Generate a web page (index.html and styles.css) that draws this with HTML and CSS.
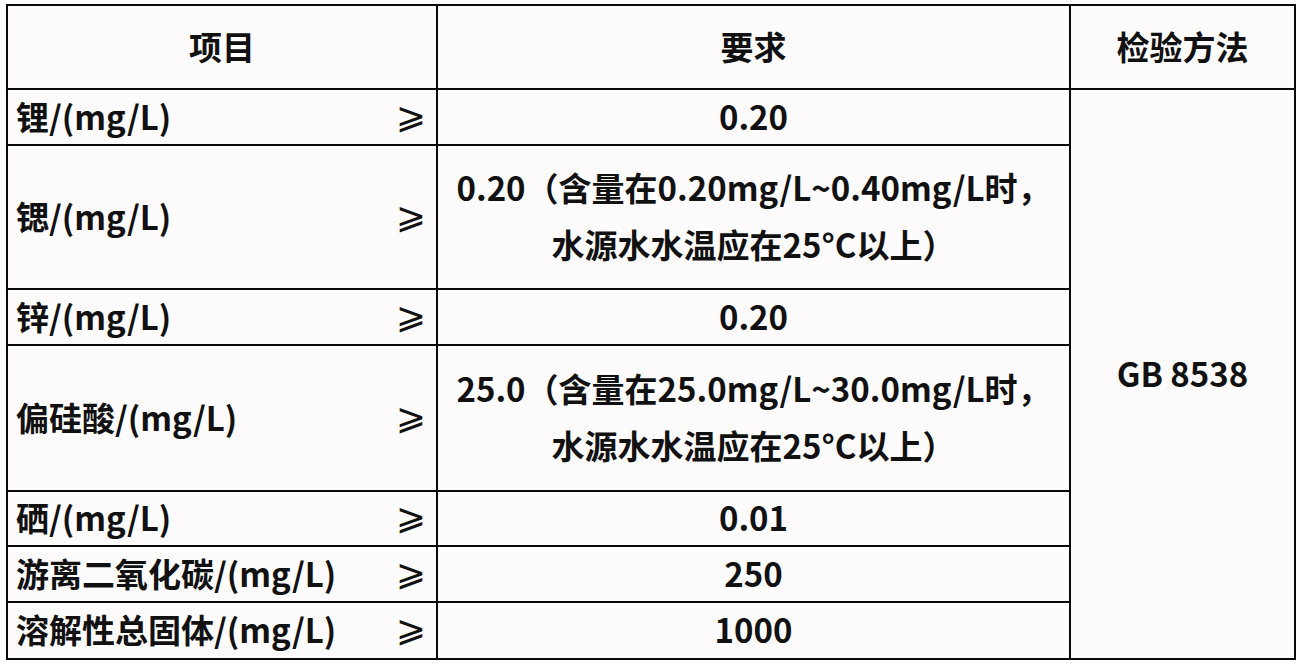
FILE: index.html
```html
<!DOCTYPE html>
<html lang="zh-CN">
<head>
<meta charset="utf-8">
<title>指标要求</title>
<link rel="stylesheet" href="styles.css">
</head>
<body>
<table class="spec">
  <colgroup>
    <col class="c-item">
    <col class="c-req">
    <col class="c-method">
  </colgroup>
  <thead>
    <tr class="h-head">
      <th>项目</th>
      <th>要求</th>
      <th>检验方法</th>
    </tr>
  </thead>
  <tbody>
    <tr class="h-56">
      <td class="item"><div class="item-in"><span>锂/(mg/L)</span><span class="ge">⩾</span></div></td>
      <td class="req">0.20</td>
      <td class="method" rowspan="7">GB 8538</td>
    </tr>
    <tr class="h-144">
      <td class="item"><div class="item-in"><span>锶/(mg/L)</span><span class="ge">⩾</span></div></td>
      <td class="req two">0.20（含量在0.20mg/L~0.40mg/L时，<br>水源水水温应在25°C以上）</td>
    </tr>
    <tr class="h-56">
      <td class="item"><div class="item-in"><span>锌/(mg/L)</span><span class="ge">⩾</span></div></td>
      <td class="req">0.20</td>
    </tr>
    <tr class="h-146">
      <td class="item"><div class="item-in"><span>偏硅酸/(mg/L)</span><span class="ge">⩾</span></div></td>
      <td class="req two">25.0（含量在25.0mg/L~30.0mg/L时，<br>水源水水温应在25°C以上）</td>
    </tr>
    <tr class="h-55">
      <td class="item"><div class="item-in"><span>硒/(mg/L)</span><span class="ge">⩾</span></div></td>
      <td class="req">0.01</td>
    </tr>
    <tr class="h-56">
      <td class="item"><div class="item-in"><span>游离二氧化碳/(mg/L)</span><span class="ge">⩾</span></div></td>
      <td class="req">250</td>
    </tr>
    <tr class="h-57">
      <td class="item"><div class="item-in"><span>溶解性总固体/(mg/L)</span><span class="ge">⩾</span></div></td>
      <td class="req">1000</td>
    </tr>
  </tbody>
</table>
</body>
</html>
```

FILE: styles.css
```css
html, body {
  margin: 0;
  padding: 0;
  background: #ffffff;
}

body {
  padding: 4px 0 0 6px;
  font-family: "Noto Sans CJK SC", "Noto Sans", sans-serif;
  color: #111111;
}

.spec {
  border-collapse: collapse;
  table-layout: fixed;
  width: 1288px;
  background: #fdfbfc;
}

.c-item { width: 430px; }
.c-req { width: 633px; }
.c-method { width: 225px; }

.spec th,
.spec td {
  border: 2px solid #0a0a0a;
  padding: 0 0 3px 0;
  font-size: 33px;
  font-weight: 700;
  line-height: 44px;
  vertical-align: middle;
}

.spec th {
  text-align: center;
}

.h-head { height: 84px; }
.h-55 { height: 55px; }
.h-56 { height: 56px; }
.h-57 { height: 57px; }
.h-144 { height: 144px; }
.h-146 { height: 146px; }

.item-in {
  display: flex;
  align-items: center;
  justify-content: space-between;
  padding: 0 10px 0 8px;
}

.ge {
  font-family: "DejaVu Sans", sans-serif;
  font-weight: 400;
  font-size: 36px;
  line-height: 44px;
}

.req {
  text-align: center;
}

.req.two {
  line-height: 57px;
}

.method {
  text-align: center;
  padding-bottom: 10px;
}
```
